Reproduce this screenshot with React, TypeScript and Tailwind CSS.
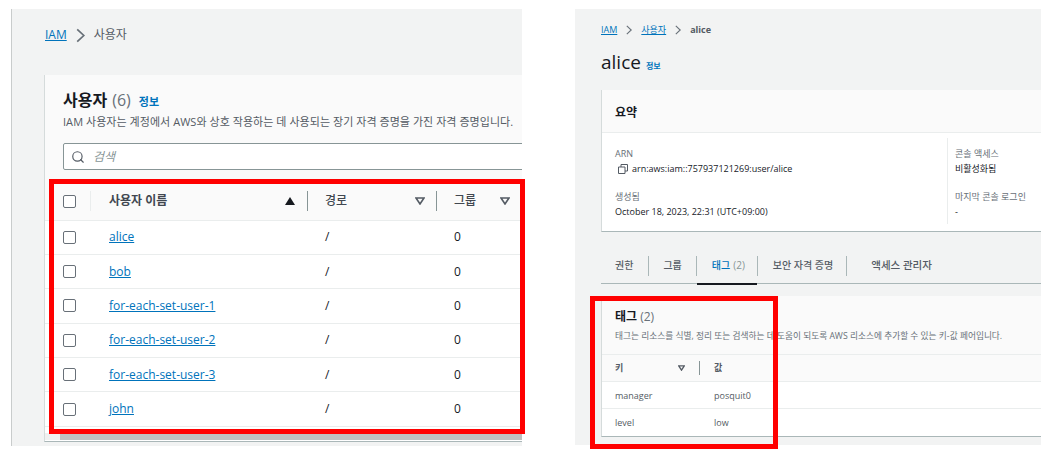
import { Search } from 'lucide-react'

const users = ['alice', 'bob', 'for-each-set-user-1', 'for-each-set-user-2', 'for-each-set-user-3', 'john']

const font = 'font-["Open_Sans","Noto_Sans_CJK_KR",sans-serif]'

function Chevron({ size = 14 }: { size?: number }) {
  return (
    <svg width={size} height={size} viewBox="0 0 16 16" fill="none" stroke="#687078" strokeWidth="1.8" className="shrink-0">
      <path d="M4.5 1.5 11.5 8l-7 6.5" />
    </svg>
  )
}

function SortDown() {
  return (
    <svg width="10" height="8" viewBox="0 0 10 8" fill="none" stroke="#545b64" strokeWidth="1.6" className="shrink-0">
      <path d="M1 1h8L5 7z" />
    </svg>
  )
}

function SortUp() {
  return (
    <svg width="10" height="8" viewBox="0 0 10 8" fill="#16191f" className="shrink-0">
      <path d="M0 8h10L5 0z" />
    </svg>
  )
}

function Checkbox() {
  return <span className="block w-[13px] h-[13px] rounded-[2px] border border-[#687078] bg-white" />
}

function UsersPanel() {
  return (
    <section className="w-[511px] h-[437px] shrink-0 ml-[11px] mt-[9px] bg-[#f2f3f3] border-l border-[#c9cccc] overflow-hidden">
      <nav className="flex items-center gap-[6px] pl-[33px] pt-[2px] h-[50px] text-[12px] text-[#545b64]">
        <a className="text-[#0073bb] underline">IAM</a>
        <Chevron size={15} />
        <span>사용자</span>
      </nav>
      <div className="ml-[32px] mt-[16px] w-[600px] h-[367px] flex flex-col bg-white border-l border-l-[#d5dbdb] border-b border-b-[#aab7b8]">
        <div className="bg-[#fafafa] h-[105.5px] pl-[18px] pt-[14px]">
          <h2 className="flex items-baseline text-[16px] leading-[22px] font-bold text-[#16191f]">
            사용자
            <span className="ml-[5px] font-normal text-[#687078]">(6)</span>
            <span className="ml-[8px] text-[11px] font-bold text-[#0073bb]">정보</span>
          </h2>
          <p className="mt-[2px] text-[11px] leading-[14px] tracking-[0.05px] text-[#545b64]">
            IAM 사용자는 계정에서 AWS와 상호 작용하는 데 사용되는 장기 자격 증명을 가진 자격 증명입니다.
          </p>
          <div className="mt-[14px] h-[27px] w-[540px] flex items-center gap-[8px] pl-[7px] bg-white border border-[#879596] rounded-[2px]">
            <Search size={14} strokeWidth={2} className="text-[#545b64]" />
            <span className="italic text-[12px] text-[#879596]">검색</span>
          </div>
        </div>
        <div className="bg-[#fafafa] h-[40px] pt-[2px] flex items-center border-b border-[#eaeded] text-[12px] font-bold text-[#414750]">
          <div className="w-[46px] h-[20px] flex items-center pl-[18px] mr-[18px] border-r border-[#eaeded]"><Checkbox /></div>
          <div className="w-[197px] flex items-center justify-between pr-[11px]">
            <span>사용자 이름</span>
            <SortUp />
          </div>
          <div className="w-[129px] h-[20px] flex items-center justify-between ml-[1px] pl-[17px] pr-[11px] border-l border-[#879596]">
            <span className="font-medium">경로</span>
            <SortDown />
          </div>
          <div className="w-[85px] h-[20px] flex items-center justify-between pl-[17px] pr-[11px] border-l border-[#879596]">
            <span className="font-medium">그룹</span>
            <SortDown />
          </div>
        </div>
        {users.map((name) => (
          <div key={name} className="h-[34.4px] flex items-center border-b border-[#eaeded] text-[12px] text-[#16191f]">
            <div className="w-[64px] pl-[18px]"><Checkbox /></div>
            <a className="w-[216px] text-[#0073bb] underline">{name}</a>
            <span className="w-[129px]">/</span>
            <span>0</span>
          </div>
        ))}
        {/* horizontal scrollbar */}
        <div className="mt-auto mb-[1px] pl-[15px] h-[7px] bg-[#f0f0f0]">
          <div className="h-full bg-[#bfbfbf]" />
        </div>
      </div>
    </section>
  )
}

function Field({ label, value }: { label: string; value: string }) {
  return (
    <div>
      <div className="text-[9px] leading-[14px] text-[#687078]">{label}</div>
      <div className="text-[9px] leading-[16px] text-[#16191f]">{value}</div>
    </div>
  )
}

function UserDetailPanel() {
  return (
    <section className="w-[466px] h-[436px] shrink-0 ml-[53px] mt-[9px] bg-[#f2f3f3] overflow-hidden">
      <nav className="flex items-center gap-[7px] pl-[26px] pt-[14px] text-[9px] leading-[14px] text-[#545b64]">
        <a className="text-[#0073bb] underline">IAM</a>
        <Chevron size={10} />
        <a className="text-[#0073bb] underline">사용자</a>
        <Chevron size={10} />
        <span className="font-bold">alice</span>
      </nav>
      <h1 className="flex items-baseline pl-[26px] mt-[12px] text-[19px] leading-[26px] text-[#16191f]">
        alice
        <span className="ml-[5px] text-[8px] font-bold text-[#0073bb]">정보</span>
      </h1>
      <div className="ml-[26px] mt-[11px] w-[500px] bg-white border-l border-l-[#d5dbdb] border-b border-b-[#aab7b8]">
        <div className="h-[43px] pt-[3px] flex items-center pl-[13px] bg-[#fafafa] border-b border-[#eaeded] text-[12px] font-bold text-[#16191f]">
          요약
        </div>
        <div className="h-[98px] flex pt-[5px]">
          <div className="w-[345px] pl-[13px] pt-[9px] flex flex-col gap-[13px]">
            <div>
              <div className="text-[9px] leading-[14px] text-[#687078]">ARN</div>
              <div className="flex items-center gap-[4px] pl-[3px] text-[9px] leading-[16px] text-[#16191f]">
                <svg width="10" height="10" viewBox="0 0 10 10" fill="none" stroke="#545b64" strokeWidth="1">
                  <path d="M3 3V.5h6.5V7H7M.5 3H7v6.5H.5z" />
                </svg>
                arn:aws:iam::757937121269:user/alice
              </div>
            </div>
            <Field label="생성됨" value="October 18, 2023, 22:31 (UTC+09:00)" />
          </div>
          <div className="h-[86px] pl-[7px] pt-[9px] border-l border-[#eaeded] flex flex-col gap-[13px]">
            <Field label="콘솔 액세스" value="비활성화됨" />
            <Field label="마지막 콘솔 로그인" value="-" />
          </div>
        </div>
      </div>
      <div className="ml-[26px] mt-[13px] h-[39px] pt-[3px] flex items-center border-b border-[#aab7b8] text-[10px] font-medium text-[#545b64]">
        <div className="pl-[14px] pr-[15px] h-[20px] flex items-center border-r border-[#aab7b8]">권한</div>
        <div className="px-[14px] h-[20px] flex items-center border-r border-[#aab7b8]">그룹</div>
        <div className="relative w-[60px] pl-[15px] h-[36px] flex items-center text-[#0073bb]">
          태그<span className="ml-[3px] font-normal text-[#879596]">(2)</span>
          <span className="absolute left-0 right-0 bottom-[-1px] h-[2px] bg-[#16191f]" />
        </div>
        <div className="pl-[15px] pr-[13px] h-[20px] flex items-center border-x border-[#aab7b8]">보안 자격 증명</div>
        <div className="pl-[24px] h-[20px] flex items-center text-[10.5px]">액세스 관리자</div>
      </div>
      <div className="ml-[26px] mt-[12px] w-[500px] bg-white border-l border-l-[#d5dbdb] border-b border-b-[#aab7b8]">
        <div className="h-[59px] bg-[#fafafa] border-b border-[#eaeded] pl-[13px] pt-[12px]">
          <h2 className="text-[12px] leading-[18px] font-bold text-[#16191f]">
            태그 <span className="font-normal text-[#687078]">(2)</span>
          </h2>
          <p className="mt-[4px] text-[8.7px] leading-[12px] text-[#687078]">
            태그는 리소스를 식별, 정리 또는 검색하는 데 도움이 되도록 AWS 리소스에 추가할 수 있는 키-값 페어입니다.
          </p>
        </div>
        <div className="h-[27px] flex items-center bg-[#fafafa] border-b border-[#eaeded] text-[9px] font-bold text-[#545b64]">
          <div className="w-[98px] h-[14px] flex items-center justify-between pl-[13px] pr-[14px] border-r border-[#879596]">
            <span>키</span>
            <svg width="7" height="6" viewBox="0 0 10 8" fill="none" stroke="#545b64" strokeWidth="2">
              <path d="M1 1h8L5 7z" />
            </svg>
          </div>
          <span className="pl-[14px]">값</span>
        </div>
        {[['manager', 'posquit0'], ['level', 'low']].map(([k, v]) => (
          <div key={k} className="h-[27px] pt-[1px] flex items-center border-b border-[#eaeded] last:border-b-0 text-[9px] text-[#545b64]">
            <span className="w-[98px] pl-[13px]">{k}</span>
            <span className="pl-[14px]">{v}</span>
          </div>
        ))}
      </div>
    </section>
  )
}

export default function App() {
  return (
    <div className={`relative flex w-[1049px] h-[452px] bg-white overflow-hidden ${font}`}>
      <UsersPanel />
      <UserDetailPanel />
      {/* highlight boxes sit on top of both panels */}
      <div className="absolute left-[49px] top-[179px] w-[476px] h-[255px] border-[5px] border-[#ff0000]" />
      <div className="absolute left-[590px] top-[296px] w-[188px] h-[153px] border-[5px] border-[#ff0000]" />
    </div>
  )
}
